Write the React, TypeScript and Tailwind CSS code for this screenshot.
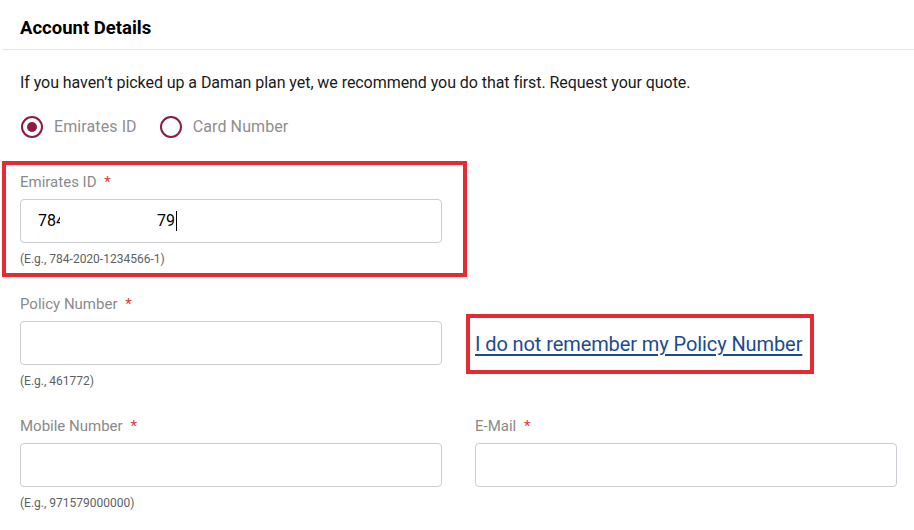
const font = { fontFamily: "Roboto, 'Liberation Sans', sans-serif" };

function Label({ text }: { text: string }) {
  return (
    <div className="h-[20px] pt-[1px] leading-[20px] text-[15px] text-[#8a8a8a]">
      {text} <span className="ml-[4px] text-[#e53935]">*</span>
    </div>
  );
}

function Field({
  label,
  hint,
  children,
}: {
  label: string;
  hint?: string;
  children?: React.ReactNode;
}) {
  return (
    <div className="h-[122px]">
      <Label text={label} />
      <div className="mt-[8px] h-[44px] rounded-[4px] border border-[#c9cdd3] bg-white">{children}</div>
      {hint && <div className="mt-[8px] h-[16px] leading-[16px] text-[12px] text-[#5c6166]">{hint}</div>}
    </div>
  );
}

function Radio({ checked, label }: { checked?: boolean; label: string }) {
  return (
    <div className="flex items-center gap-[11px]">
      <span className="flex h-[22px] w-[22px] items-center justify-center rounded-full border-2 border-[#8b1d41]">
        {checked && <span className="h-[10px] w-[10px] rounded-full bg-[#8b1d41]" />}
      </span>
      <span className="text-[16px] tracking-[0.1px] text-[#8e8e8e]">{label}</span>
    </div>
  );
}

export default function App() {
  return (
    <div className="relative h-[530px] w-[914px] overflow-hidden bg-white text-black" style={font}>
      <div className="ml-[2px] border-b border-[#e3e5e8] pl-[18px] pt-[17px] pb-[10px]">
        <h2 className="text-[18.5px] font-bold leading-[22px]">Account Details</h2>
      </div>

      <div className="px-[20px]">
        <p className="mt-[21px] text-[16px] leading-[24px] tracking-[-0.06px] text-[#1a1a1a]">
          If you haven’t picked up a Daman plan yet, we recommend you do that first. Request your quote.
        </p>

        <div className="mt-[20px] flex h-[24px] items-center gap-[23px] pl-[1px]">
          <Radio checked label="Emirates ID" />
          <Radio label="Card Number" />
        </div>

        <div className="mt-[32px] grid w-[877px] grid-cols-2 gap-x-[33px]">
          <Field label="Emirates ID" hint="(E.g., 784-2020-1234566-1)">
            <div className="flex h-full items-center pl-[17px] text-[16px] text-black">
              <span className="inline-block w-[22px] overflow-hidden whitespace-nowrap">784</span>
              <span className="ml-[97px]">79</span>
              <span className="ml-[1px] inline-block h-[20px] w-[1px] bg-black" />
            </div>
          </Field>
          <div />

          <Field label="Policy Number" hint="(E.g., 461772)" />
          <div className="pt-[29px]">
            <div className="flex h-[44px] items-center">
              <a href="#" className="text-[20px] leading-[24px] tracking-[-0.09px] text-[#1d4b8f] underline underline-offset-[3px]">
                I do not remember my Policy Number
              </a>
            </div>
          </div>

          <Field label="Mobile Number" hint="(E.g., 971579000000)" />
          <Field label="E-Mail" />
        </div>
      </div>

      {/* annotation boxes */}
      <div className="pointer-events-none absolute left-[2px] top-[161px] h-[116px] w-[465px] border-4 border-[#e52b2f]" />
      <div className="pointer-events-none absolute left-[466px] top-[314px] h-[60px] w-[348px] border-4 border-[#e52b2f]" />
    </div>
  );
}
